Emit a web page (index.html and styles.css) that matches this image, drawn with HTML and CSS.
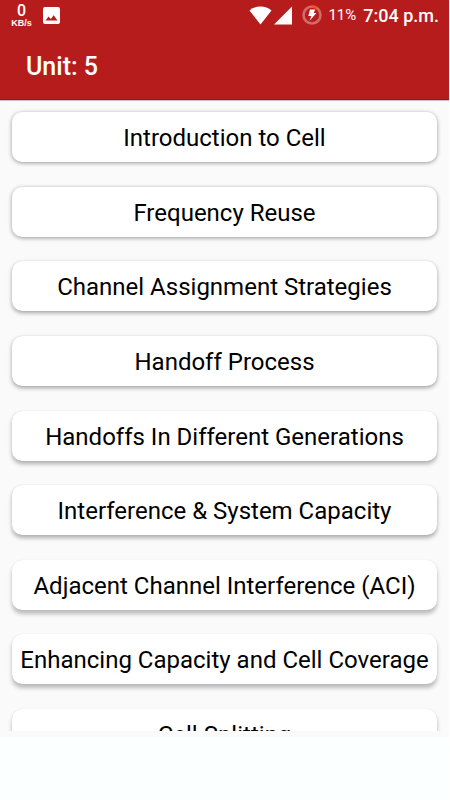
FILE: index.html
```html
<!DOCTYPE html>
<html lang="en">
<head>
    <meta charset="UTF-8">
    <meta name="viewport" content="width=device-width, initial-scale=1.0">
    <title>Unit: 5</title>
    <link rel="stylesheet" href="styles.css">
</head>
<body>
    <header class="header">
        <div class="status-bar">
            <div class="speed">
                <span class="speed-value">0</span>
                <span class="speed-unit">KB/s</span>
            </div>
            <svg class="icon-picture" width="17" height="17" viewBox="0 0 17 17">
                <path fill="#fff" fill-rule="evenodd" d="M2 0h13a2 2 0 0 1 2 2v13a2 2 0 0 1-2 2H2a2 2 0 0 1-2-2V2a2 2 0 0 1 2-2zM2.500 13.500h12L10.700 8.200 7.800 12 5.500 9.500z"/>
            </svg>
            <div class="status-right">
                <svg width="23" height="19" viewBox="0 0 23 19">
                    <path fill="#fff" d="M0.500 4.500Q5 0.500 11.500 0.500T22.500 4.500L11.500 18.500z"/>
                </svg>
                <svg width="18" height="19" viewBox="0 0 18 19">
                    <path fill="#fff" d="M0 18.500H18V0.500z"/>
                </svg>
                <svg class="icon-battery" width="20" height="20" viewBox="0 0 20 20">
                    <circle cx="10" cy="10" r="8.500" fill="none" stroke="#d36a6a" stroke-width="2.600"/>
                    <path fill="none" stroke="#f4511e" stroke-width="2.600" d="M10 1.500a8.500 8.500 0 0 1 5.400 1.900"/>
                    <path fill="#fff" d="M8 4.500h5.200l-1.500 3.600h2.800L7.600 15.800l1.700-4.900H6.300z"/>
                </svg>
                <span class="battery-text">11%</span>
                <span class="clock">7:04 p.m.</span>
            </div>
        </div>
        <h1 class="title">Unit: 5</h1>
    </header>
    <main class="content">
        <div class="topics">
            <button class="topic">Introduction to Cell</button>
            <button class="topic">Frequency Reuse</button>
            <button class="topic">Channel Assignment Strategies</button>
            <button class="topic">Handoff Process</button>
            <button class="topic">Handoffs In Different Generations</button>
            <button class="topic">Interference &amp; System Capacity</button>
            <button class="topic">Adjacent Channel Interference (ACI)</button>
            <button class="topic">Enhancing Capacity and Cell Coverage</button>
            <button class="topic">Cell Splitting</button>
        </div>
    </main>
    <footer class="ad-space"></footer>
</body>
</html>
```
FILE: styles.css
```css
* {
    box-sizing: border-box;
}
body {
    display: flex;
    flex-direction: column;
    height: 100vh;
    margin: 0;
    padding-right: 1px;
    background-color: #fff;
    font-family: Roboto, sans-serif;
    overflow: hidden;
}
.header {
    position: relative;
    flex: none;
    height: 100px;
    background-color: #b71c1c;
    border-bottom: 1px solid #b00808;
    box-shadow: 0 1px 1px rgba(0, 0, 0, 0.2);
    color: #fff;
}
.status-bar {
    display: flex;
    align-items: center;
    height: 30px;
    padding: 0 10px 0 11px;
}
.speed {
    display: flex;
    flex-direction: column;
    align-items: center;
    width: 21px;
}
.speed-value {
    font-size: 16px;
    line-height: 17px;
    font-weight: 500;
}
.speed-unit {
    font-family: "Liberation Sans", Arial, sans-serif;
    font-size: 9px;
    line-height: 9px;
    font-weight: 700;
}
.icon-picture {
    margin-left: 11px;
}
.status-right {
    display: flex;
    align-items: center;
    gap: 2px;
    margin-left: auto;
}
.icon-battery {
    margin-left: 8px;
}
.battery-text {
    margin-left: 4px;
    font-size: 15px;
}
.clock {
    margin-left: 5px;
    font-size: 18px;
    font-weight: 500;
}
.title {
    margin: 0;
    padding: 19px 26px;
    font-size: 25px;
    line-height: 36px;
    font-weight: 500;
}
.content {
    flex: 1;
    min-height: 0;
    background-color: #fafafa;
    border-bottom: 6px solid #fafafa;
    overflow: hidden;
}
/* nine rows of 50px spread evenly over the list */
.topics {
    display: flex;
    flex-direction: column;
    justify-content: space-between;
    min-height: 671px;
    padding: 12px;
}
.topic {
    flex: none;
    height: 50px;
    padding: 2px 8px 0;
    border: none;
    border-radius: 10px;
    background-color: #fff;
    box-shadow: 0 1px 4px rgba(0, 0, 0, 0.4);
    color: #000;
    font-family: inherit;
    font-size: 24px;
    white-space: nowrap;
    cursor: pointer;
}
/* shadows fall lower towards the bottom of the screen */
.topic:nth-child(n+3) {
    box-shadow: 0 2px 4px rgba(0, 0, 0, 0.35), 0 0 1px rgba(0, 0, 0, 0.15);
}
.topic:nth-child(n+5) {
    box-shadow: 0 3px 4px rgba(0, 0, 0, 0.3), 0 0 1px rgba(0, 0, 0, 0.15);
}
.topic:nth-child(n+7) {
    box-shadow: 0 4px 4px rgba(0, 0, 0, 0.25), 0 0 1px rgba(0, 0, 0, 0.15);
}
.ad-space {
    flex: none;
    height: 63px;
    background-color: #fbffff;
}
```
